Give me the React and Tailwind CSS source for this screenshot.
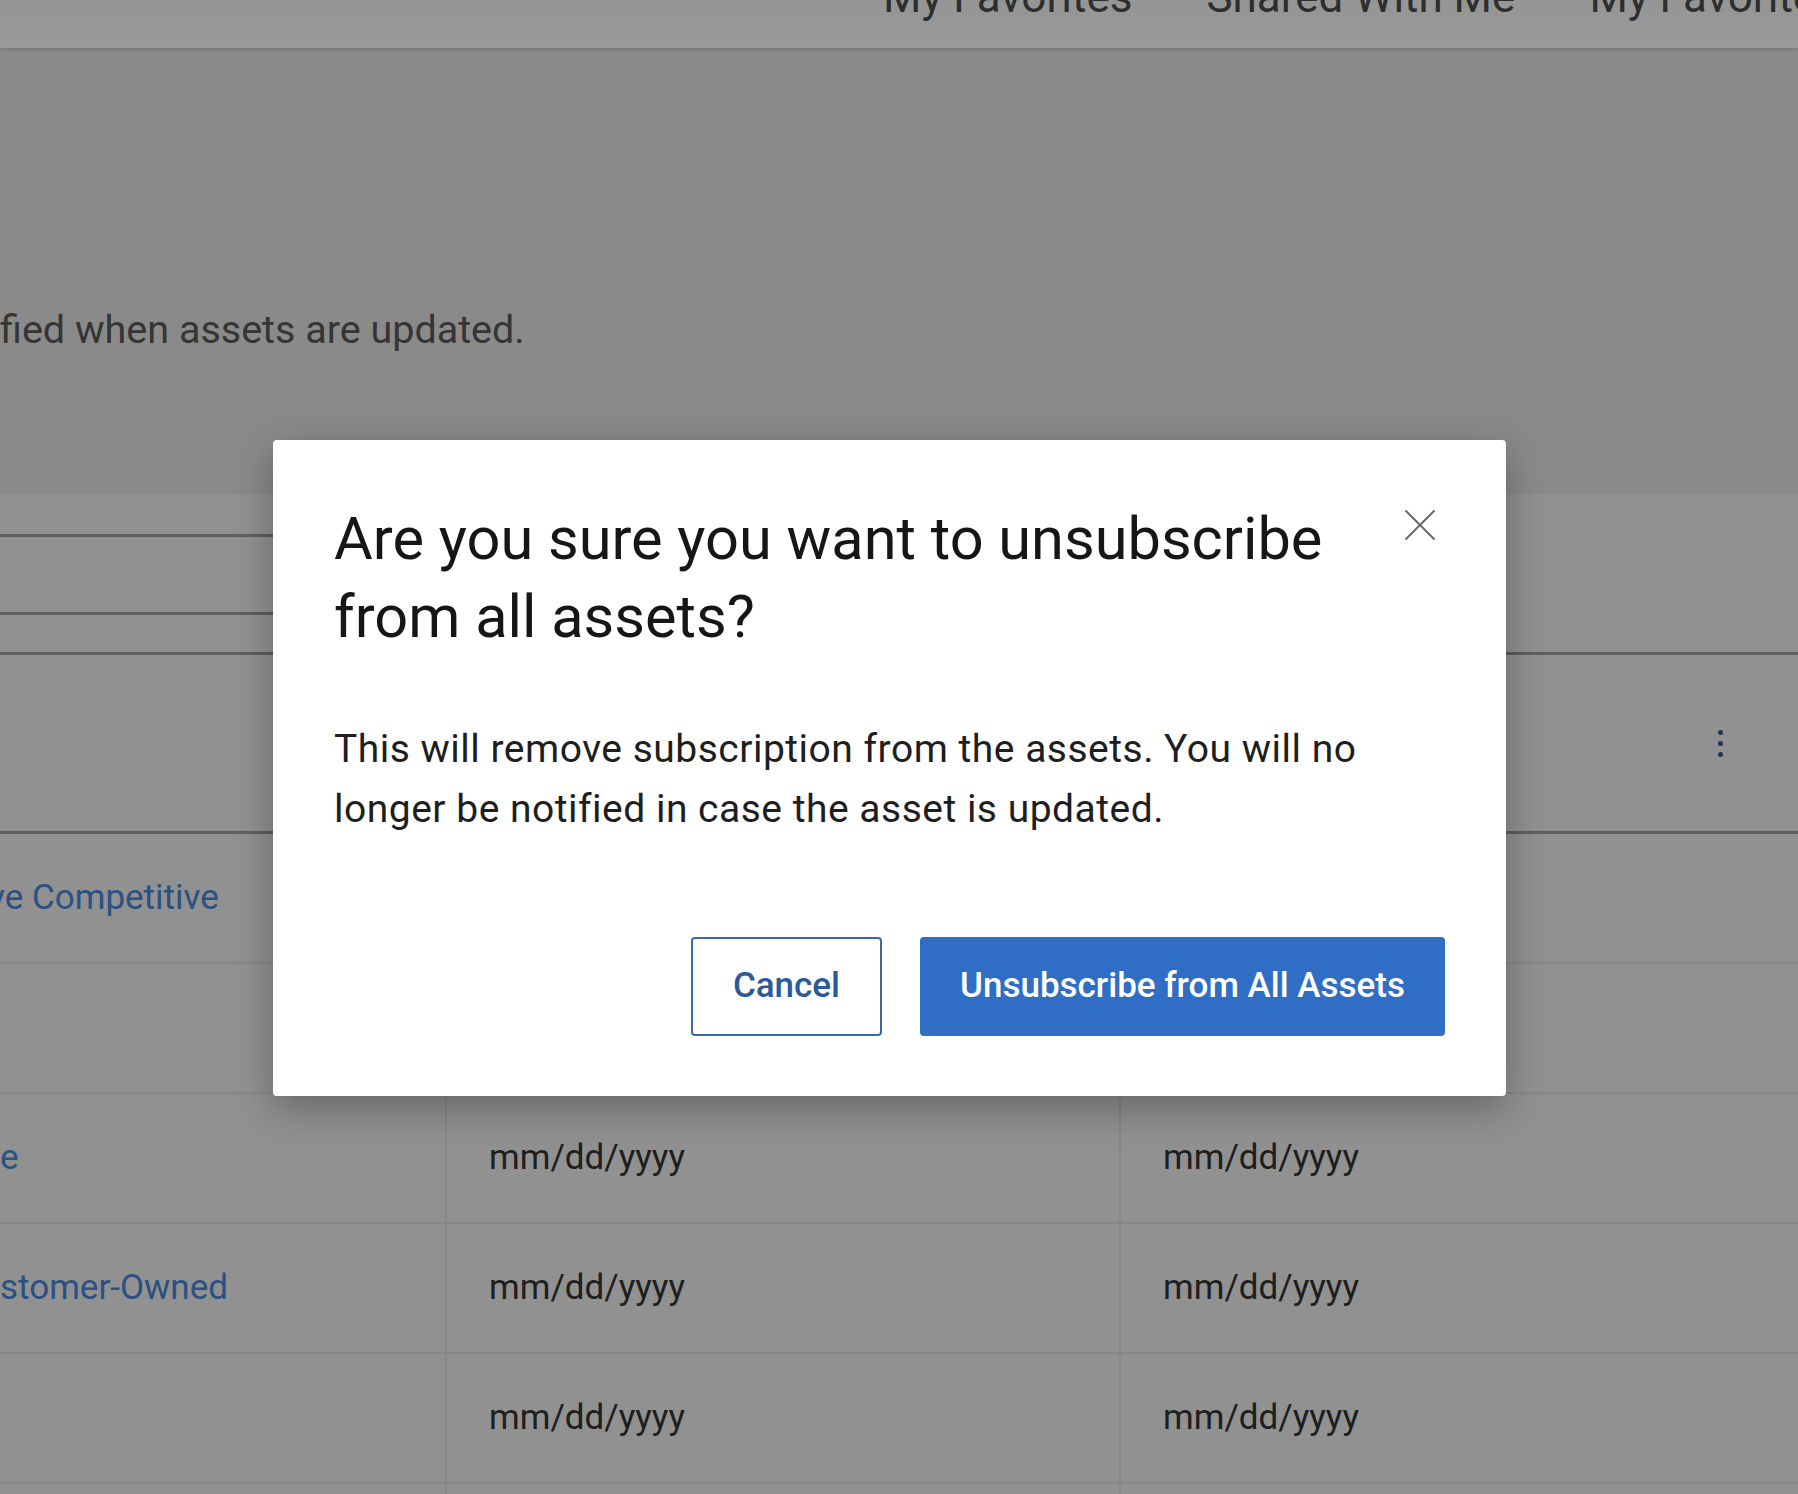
import { useState } from 'react'

const rows = [
  { name: 've Competitive', shift: true, start: 'mm/dd/yyyy', end: 'mm/dd/yyyy' },
  { name: '', start: 'mm/dd/yyyy', end: 'mm/dd/yyyy' },
  { name: 'e', start: 'mm/dd/yyyy', end: 'mm/dd/yyyy' },
  { name: 'stomer-Owned', start: 'mm/dd/yyyy', end: 'mm/dd/yyyy' },
  { name: '', start: 'mm/dd/yyyy', end: 'mm/dd/yyyy' },
  { name: '', start: '', end: '' },
]

function CloseIcon() {
  return (
    <svg width="32" height="32" viewBox="0 0 32 32" fill="none">
      <path d="M2 2L30 30M30 2L2 30" stroke="#6b6b6b" strokeWidth="2" strokeLinecap="round" />
    </svg>
  )
}

function Kebab() {
  return (
    <div className="flex flex-col items-center gap-[6px]">
      <span className="block w-[5px] h-[5px] rounded-full bg-[#1f3552]" />
      <span className="block w-[5px] h-[5px] rounded-full bg-[#1f3552]" />
      <span className="block w-[5px] h-[5px] rounded-full bg-[#1f3552]" />
    </div>
  )
}

export default function App() {
  const [open, setOpen] = useState(true)

  return (
    <div className="relative w-[1798px] h-[1494px] overflow-hidden bg-[#8a8a8a] font-['Roboto','Liberation_Sans',sans-serif]">
      {/* Top navigation */}
      <header className="h-[48px] bg-gradient-to-b from-[#959595] to-[#999999] shadow-[0_2px_3px_rgba(0,0,0,0.12)] overflow-hidden">
        <nav className="flex pl-[883px] gap-[74px] -mt-[25px] text-[44px] leading-[44px] text-[#2e2e2e] whitespace-nowrap">
          <span>My Favorites</span>
          <span>Shared With Me</span>
          <span>My Favorites</span>
        </nav>
      </header>

      {/* Page intro */}
      <section className="h-[446px]">
        <p className="pt-[262px] text-[39.5px] leading-[40px] text-[#353535] whitespace-nowrap">
          fied when assets are updated.
        </p>
      </section>

      {/* Table area */}
      <section className="bg-[#919191]">
        <div className="h-[40px]" />
        <div className="w-[900px] h-[81px] border-y-[3px] border-[#5f5f5f]" />
        <div className="h-[37px]" />
        <div className="h-[182px] border-y-[3px] border-[#5f5f5f] flex items-center justify-end pr-[75px]">
          <Kebab />
        </div>
        {rows.map((r, i) => (
          <div key={i} className="grid grid-cols-[445px_674px_1fr] h-[130px] border-b-2 border-[#878787] text-[35px] leading-[40px]">
            <div className="flex items-center overflow-hidden text-[#2b5082] whitespace-nowrap">
              <span className={r.shift ? '-ml-[12px]' : ''}>{r.name}</span>
            </div>
            <div className="flex items-center pl-[42px] border-l-2 border-[#888888] text-[#1e1e1e]">{r.start}</div>
            <div className="flex items-center pl-[42px] border-l-2 border-[#888888] text-[#1e1e1e]">{r.end}</div>
          </div>
        ))}
      </section>

      {/* Modal */}
      {open && (
        <div className="absolute inset-0 pl-[273px] pt-[440px]">
          <div className="w-[1233px] bg-white rounded-[4px] shadow-[0_12px_40px_rgba(0,0,0,0.3)] px-[61px] pt-[60px] pb-[60px]">
            <div className="flex items-start justify-between">
              <h2 className="text-[59.5px] leading-[78px] font-normal text-[#161616] pr-[60px]">
                Are you sure you want to unsubscribe from all assets?
              </h2>
              <button onClick={() => setOpen(false)} className="mt-[9px] mr-[9px] shrink-0">
                <CloseIcon />
              </button>
            </div>
            <p className="mt-[63px] text-[39px] leading-[60px] tracking-[0.5px] text-[#1e1e1e] pr-[40px]">
              This will remove subscription from the assets. You will no longer be notified in case the asset is updated.
            </p>
            <div className="mt-[98px] flex justify-end gap-[38px]">
              <button onClick={() => setOpen(false)}
                className="h-[99px] px-[40px] rounded-[4px] border-2 border-[#3d68a0] bg-white text-[35px] font-medium text-[#2a5a98]">
                Cancel
              </button>
              <button onClick={() => setOpen(false)}
                className="h-[99px] px-[40px] rounded-[4px] bg-[#2f6ec4] text-[35px] font-medium text-white">
                Unsubscribe from All Assets
              </button>
            </div>
          </div>
        </div>
      )}
    </div>
  )
}
